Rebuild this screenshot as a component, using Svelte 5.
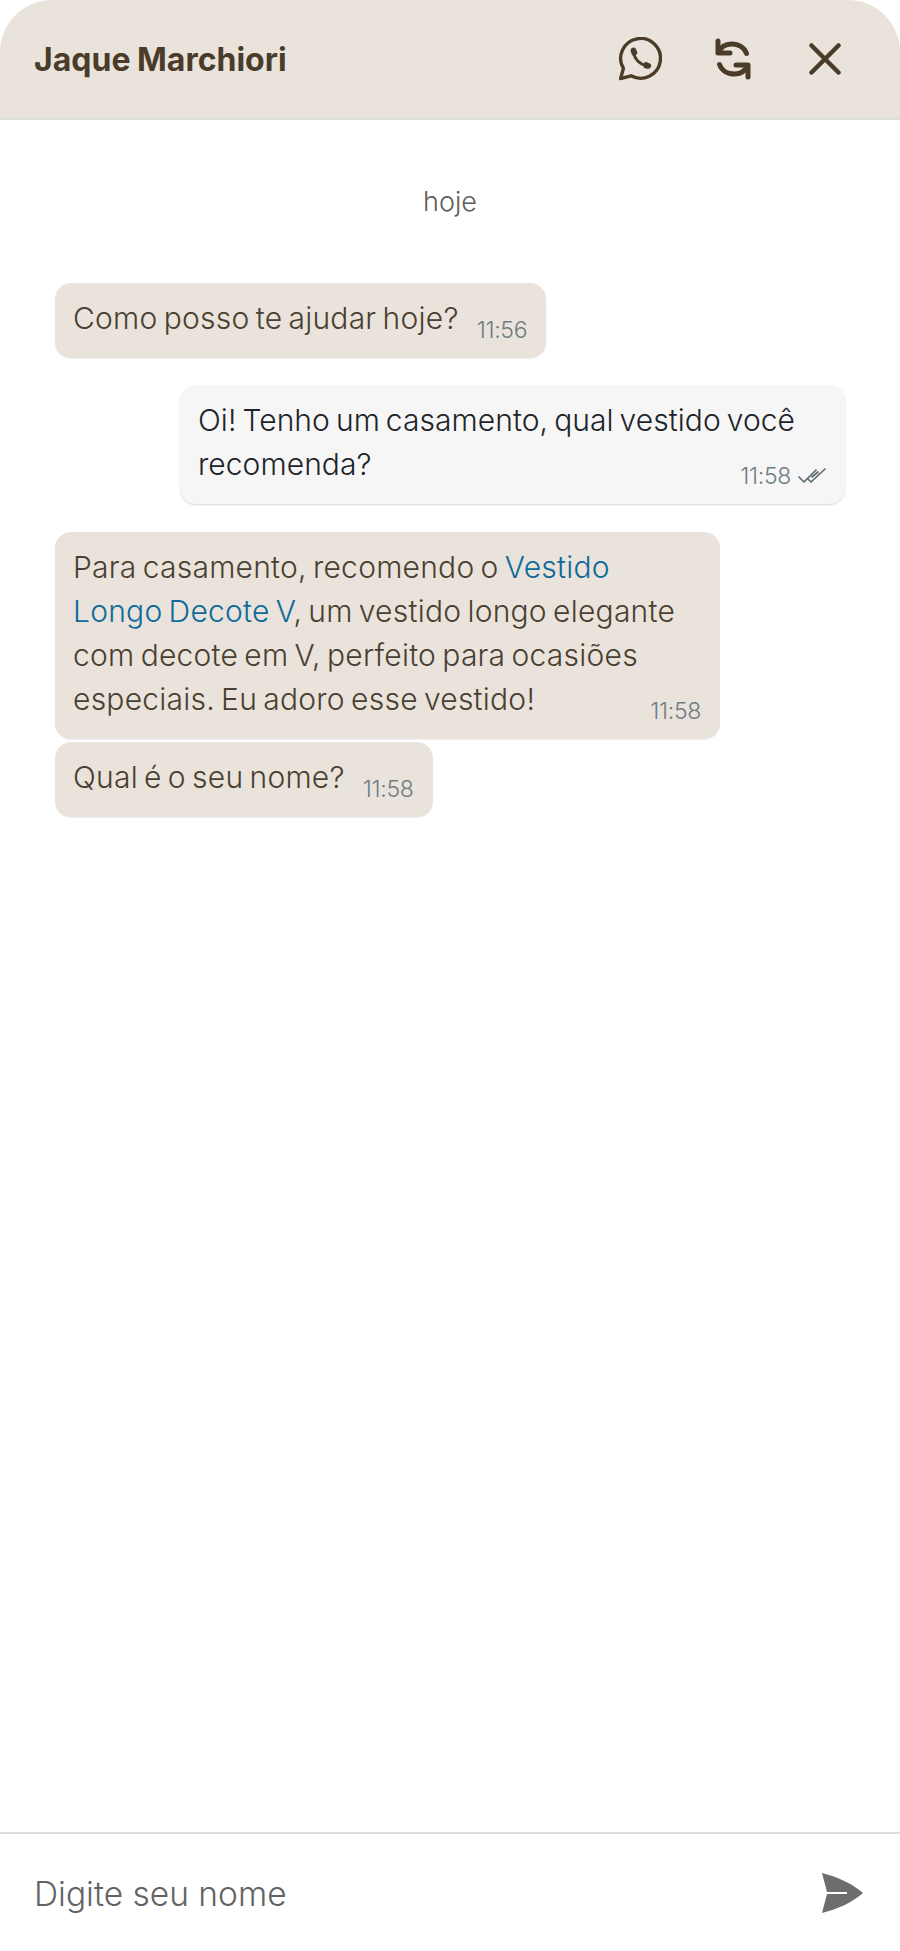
<script>
  const messages = [
    { side: 'bot', time: '11:56', parts: [{ text: 'Como posso te ajudar hoje?' }] },
    { side: 'me', time: '11:58', parts: [{ text: 'Oi! Tenho um casamento, qual vestido você recomenda?' }] },
    {
      side: 'bot',
      time: '11:58',
      parts: [
        { text: 'Para casamento, recomendo o ' },
        { text: 'Vestido Longo Decote V', link: true },
        { text: ', um vestido longo elegante com decote em V, perfeito para ocasiões especiais. Eu adoro esse vestido!' }
      ]
    },
    { side: 'bot', time: '11:58', parts: [{ text: 'Qual é o seu nome?' }] }
  ];
</script>

<div class="chat">
  <header class="top">
    <h1>Jaque Marchiori</h1>
    <div class="actions">
      <button aria-label="WhatsApp">
        <svg class="wa" viewBox="0 0 44 44" fill="none" stroke="currentColor" stroke-width="3.4" stroke-linejoin="round" stroke-linecap="round">
          <path d="M2.600 41.600 5.400 31.400A19.900 19.900 0 1 1 13 38.800Z" />
          <path stroke-width="2.800" d="M15.500 15.500C16.500 22 21.500 27.500 28.500 28.500" />
          <path fill="currentColor" stroke-width="1.600" d="M13.500 12.500C14.500 11.200 16.300 11 17 12.200L18.500 15.200C18.800 16 18.400 16.700 17.800 17.300L15 18C14 16 13 14 13.500 12.500ZM26.500 26.500C27.200 25.800 28 25.500 28.800 26L31.800 27.500C32.800 28.200 32.600 29.800 31.300 30.500 30 31.200 28.300 31 26.500 30.200Z" />
        </svg>
      </button>
      <button aria-label="Reiniciar">
        <svg class="sync" viewBox="0 0 36 42" fill="none" stroke="currentColor" stroke-width="5" stroke-linejoin="round" stroke-linecap="round">
          <path d="M3 3V15H15" />
          <path d="M3.500 14.500C6 8.500 11 6 16.500 6 24 6 29.500 10 31.500 15.500" />
          <path d="M33 39V27H21" />
          <path d="M32.500 27.500C30 33.500 25 36 19.500 36 12 36 6.500 32 4.500 26.500" />
        </svg>
      </button>
      <button class="dismiss" aria-label="Fechar">
        <svg class="close" viewBox="0 0 32 32" fill="none" stroke="currentColor" stroke-width="4.500" stroke-linecap="round">
          <path d="M2.500 2.500 29.500 29.500M29.500 2.500 2.500 29.500" />
        </svg>
      </button>
    </div>
  </header>

  <main class="thread">
    <div class="day">hoje</div>
    {#each messages as m}
      <div class="row {m.side}">
        <div class="bubble">
          {#each m.parts as p}{#if p.link}<a href="#top">{p.text}</a>{:else}{p.text}{/if}{/each}<span class="meta">{m.time}{#if m.side === 'me'}<svg class="ticks" viewBox="0 0 28 18" fill="none" stroke="currentColor" stroke-width="1.700" stroke-linecap="round" stroke-linejoin="round"><path d="M1 10 6 15 18 3M10.500 12.500 13 15 27 2M14 10 20 5" /></svg>{/if}</span>
        </div>
      </div>
    {/each}
  </main>

  <footer class="composer">
    <span class="hint">Digite seu nome</span>
    <button aria-label="Enviar">
      <svg class="send" viewBox="0 0 41 40" fill="#6d6d6d">
        <path d="M0 0C16 4 31 11 41 20 31 29 16 36 0 40L5 21H25V19H5Z" />
      </svg>
    </button>
  </footer>
</div>

<style>
  :global(body) {
    margin: 0;
    background: #fff;
  }

  .chat {
    display: flex;
    flex-direction: column;
    height: 1951px;
    font-family: Inter, "Liberation Sans", sans-serif;
    color: #4a3f30;
    overflow: hidden;
  }

  button {
    display: flex;
    align-items: center;
    justify-content: center;
    padding: 0;
    border: 0;
    background: none;
    color: inherit;
  }

  .top {
    display: flex;
    align-items: center;
    justify-content: space-between;
    box-sizing: border-box;
    height: 120px;
    padding: 0 59px 0 34px;
    background: #e9e3dc;
    border-bottom: 2px solid #dfdfda;
    border-radius: 52px 52px 0 0;
    color: #4a3c29;
  }

  h1 {
    margin: 0;
    font-size: 32px;
    font-weight: 700;
    word-spacing: -1px;
  }

  .actions {
    display: flex;
    align-items: center;
    gap: 53px;
  }

  .dismiss { margin-left: 5px; }

  .wa { width: 44px; height: 44px; }
  .sync { width: 36px; height: 42px; }
  .close { width: 32px; height: 32px; }

  .thread {
    flex: 1;
    display: flex;
    flex-direction: column;
    padding: 0 55px;
  }

  .day {
    margin: 66px 0 65px;
    text-align: center;
    font-size: 27px;
    font-weight: 300;
    line-height: 32px;
    color: #5f5c56;
  }

  .row {
    display: flex;
    margin-bottom: 3px;
  }

  .row.me {
    justify-content: flex-end;
    margin: 24px 0 28px;
  }

  .bubble {
    box-sizing: border-box;
    max-width: 665px;
    padding: 13px 19px 9px 18px;
    border-radius: 16px;
    background: #e9e3dc;
    font-size: 30px;
    font-weight: 350;
    line-height: 44px;
    letter-spacing: 0.24px;
    word-spacing: -2.500px;
    box-shadow: 0 1px 1px rgba(120, 110, 100, 0.12);
  }

  .me .bubble {
    background: #f6f6f6;
    color: #20242a;
    letter-spacing: 0.06px;
    box-shadow: 0 1px 2px rgba(0, 0, 0, 0.16);
  }

  a {
    color: #0e6a9b;
    text-decoration: none;
  }

  .meta {
    float: right;
    display: flex;
    align-items: center;
    gap: 7px;
    margin: 15px 0 0 18px;
    font-size: 23px;
    font-weight: 300;
    line-height: 38px;
    letter-spacing: -0.3px;
    word-spacing: 0;
    color: #6f7c82;
  }

  .ticks {
    width: 28px;
    height: 18px;
    color: #5d6a70;
  }

  .composer {
    display: flex;
    align-items: center;
    justify-content: space-between;
    box-sizing: border-box;
    height: 119px;
    padding: 2px 37px 0 34px;
    border-top: 2px solid #dcdcdc;
  }

  .hint {
    font-size: 33.500px;
    font-weight: 300;
    color: #636363;
  }

  .send {
    width: 41px;
    height: 40px;
    margin-top: -2px;
  }
</style>
